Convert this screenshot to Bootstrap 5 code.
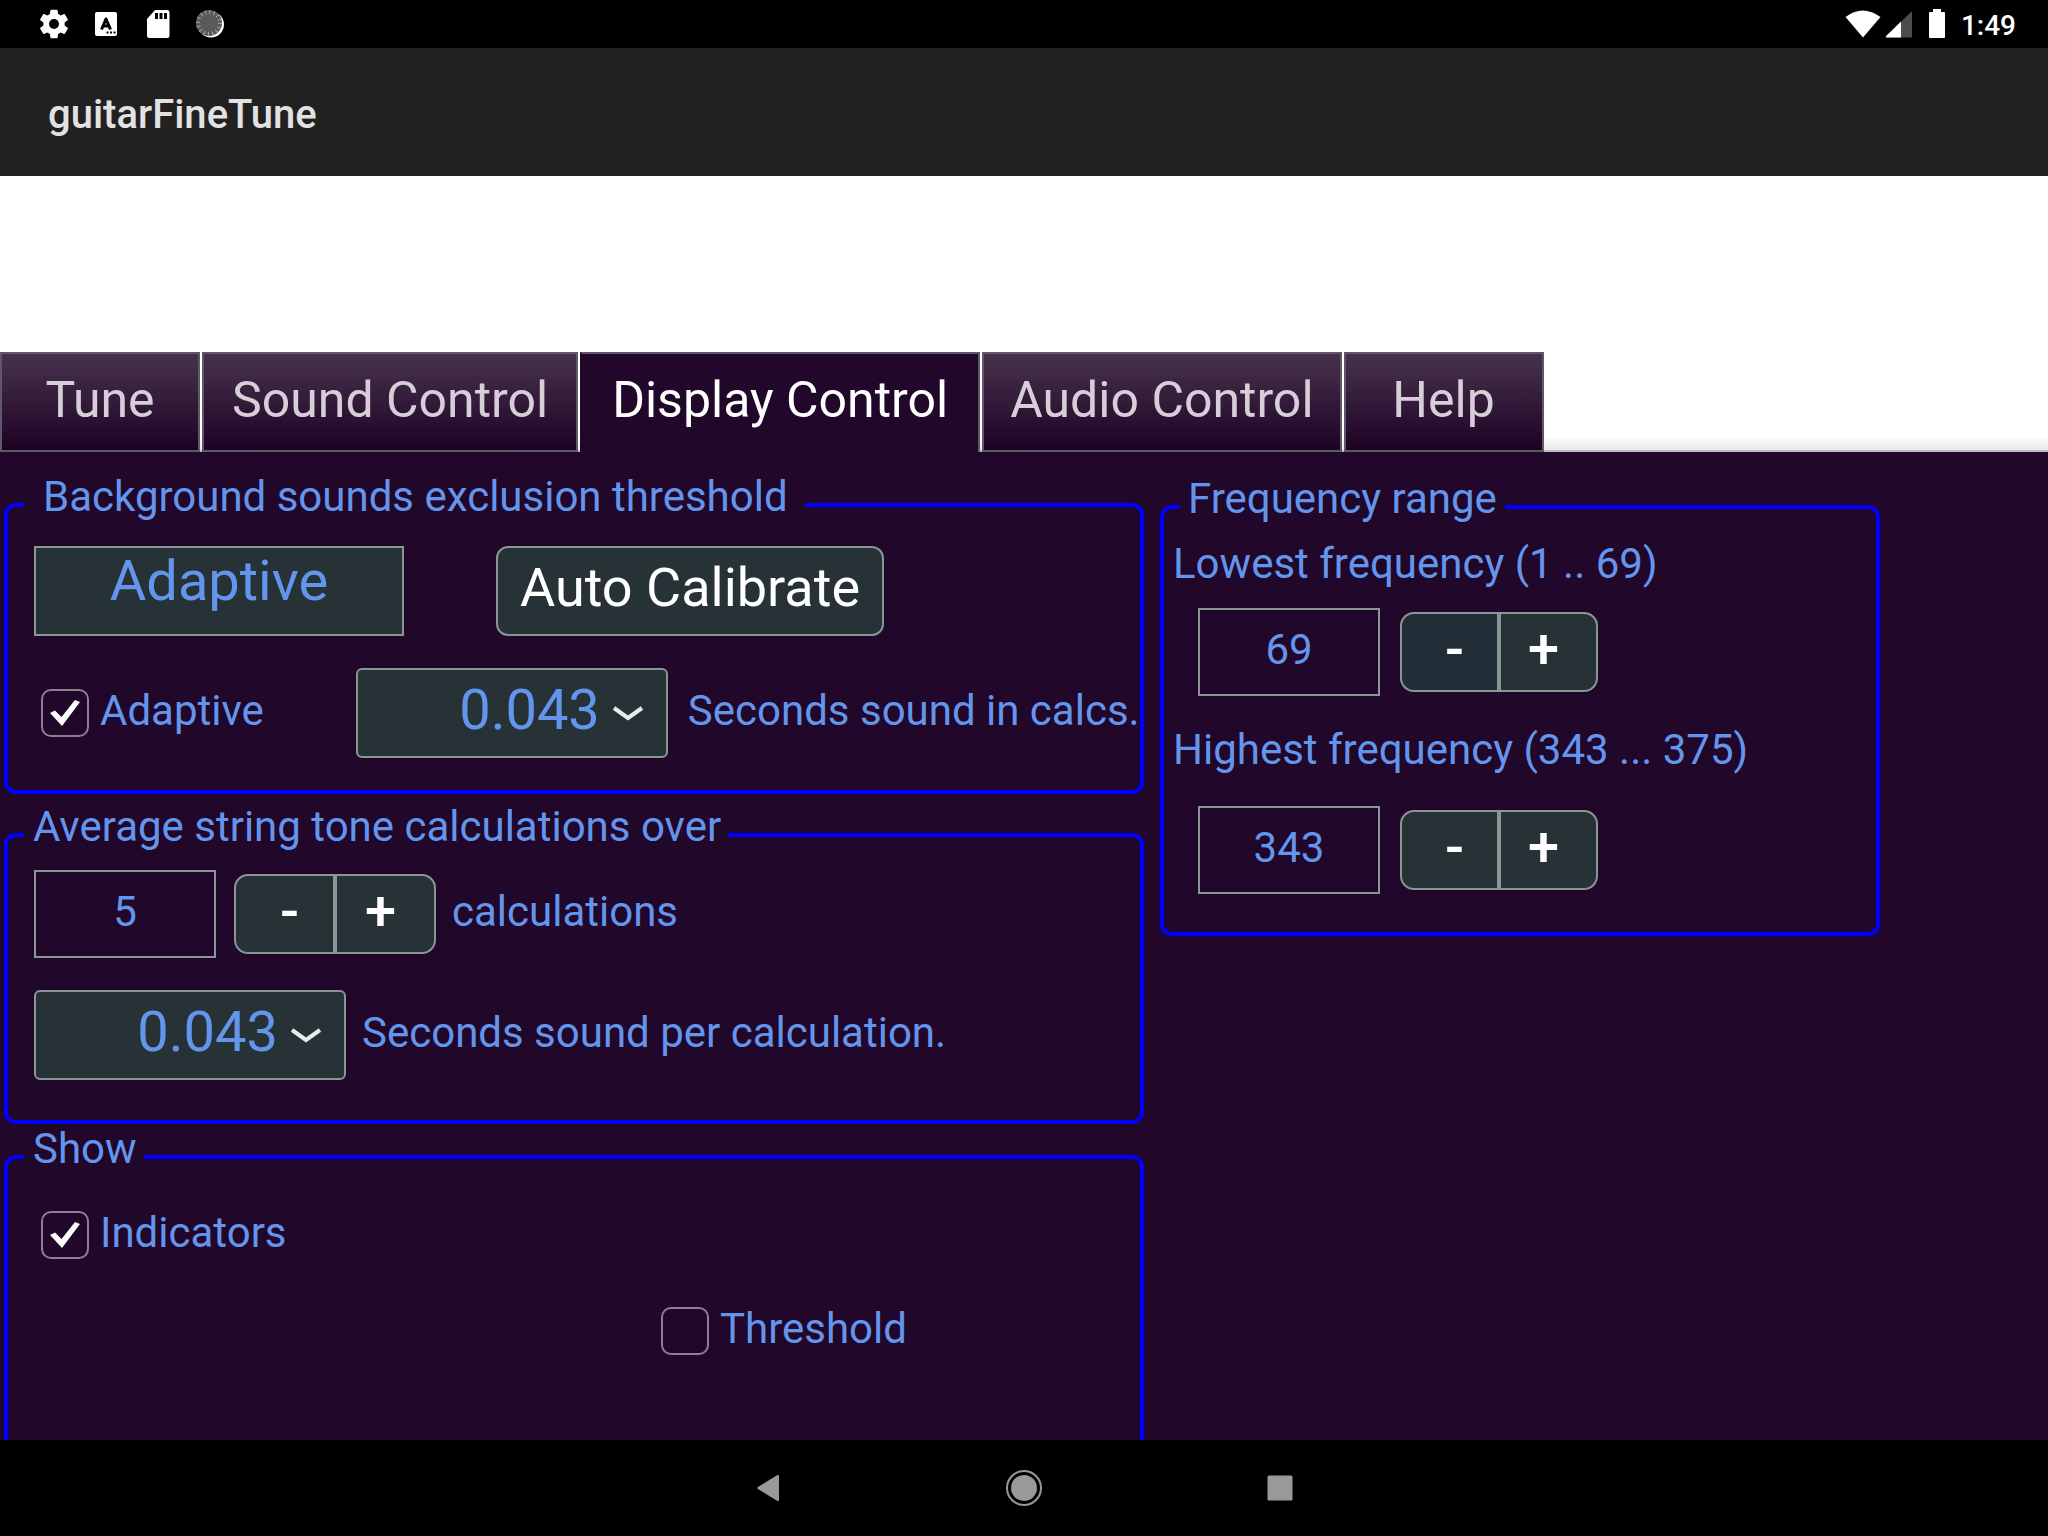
<!DOCTYPE html>
<html lang="en">
<head>
<meta charset="utf-8">
<meta name="viewport" content="width=device-width, initial-scale=1">
<title>guitarFineTune</title>
<link href="https://cdn.jsdelivr.net/npm/bootstrap@5.3.0/dist/css/bootstrap.min.css" rel="stylesheet">
<style>
  :root { --bg: #210729; --ink: #6495ed; --key: #273236; --edge: #8b9596; }
  body { font-family: Roboto, "Liberation Sans", sans-serif; background: #000; color: var(--ink); font-size: 42px; line-height: 48px; }

  .status-bar { height: 48px; padding: 0 32px 0 40px; background: #000; color: #fff; font-size: 28px; font-weight: 500; }
  .status-bar svg { display: block; }
  .title-bar { height: 128px; padding: 6px 48px 0; background: #212121; color: #e2e2e2; font-size: 40px; font-weight: 500; }
  .title-bar h1 { font: inherit; margin: 0; }

  .tab-strip { padding-top: 176px; background: #fff; }
  .tab-list { gap: 2px; background: linear-gradient(#fff 84%, #e4e4e6); box-shadow: inset 0 -2px #bcc0c4; }
  .tab-key { height: 100px; min-width: 200px; padding: 0 28px 4px; border: 2px solid #5f5869; border-radius: 0;
             background: linear-gradient(#46304b 0%, #3d2743 25%, #24092b 85%, #1a0420 100%); color: #d6cfd9; font-size: 50px; line-height: 60px; }
  .tab-key.active { background: var(--bg); color: #fff; border-bottom: 0; border-left-color: var(--bg); padding: 0 30px 6px; }
  .tab-key.active + .tab-key { padding-left: 26px; padding-right: 26px; }

  .panels { grid-template-columns: 1140fr 720fr 152fr; column-gap: 16px; align-items: start; padding: 21px 0 0 4px; background: var(--bg); min-height: 0; }
  .panels > * { min-width: 0; }
  .group { border: 4px solid #00f; border-radius: 12px; padding: 0 0 0 26px; min-width: 0; }
  .group legend { float: none; width: auto; margin: 0 0 0 -10px; padding: 0 7px 16px 9px; font-size: 42px; line-height: 48px; }
  .group legend.wide { padding: 0 17px 16px 19px; }
  .group-sound { padding-top: 9px; padding-bottom: 32px; }
  .group-average { margin-top: 9px; padding-top: 3px; padding-bottom: 40px; }
  .group-show { margin-top: 1px; padding-top: 20px; padding-bottom: 120px; }
  .group-range { margin-top: 2px; padding: 1px 8px 38px; }
  .group-range legend { margin-left: 8px; padding: 0 8px 16px; }
  .group-range .form-line { padding-left: 26px; }
  .caption { padding-bottom: 4px; white-space: nowrap; }
  .group-range .caption { display: block; padding: 0 0 0 1px; }
  .group-range .form-line + .caption { margin-top: 30px; }

  .mode-box { width: 370px; height: 90px; padding-bottom: 22px; background: var(--key); border: 2px solid var(--edge); font-size: 56px; line-height: 66px; color: var(--ink); text-align: center; border-radius: 0; }
  .calibrate { width: 388px; height: 90px; margin-left: 92px; padding: 0 0 6px; background: var(--key); border: 2px solid var(--edge); border-radius: 12px; color: #fff; font-size: 54px; line-height: 64px; font-weight: 400; }
  .pick { width: 312px; height: 90px; padding: 0 66px 6px 0; border: 2px solid var(--edge); border-radius: 6px; color: var(--ink); font-size: 56px; line-height: 66px; text-align: right; text-align-last: right; appearance: none;
          background: var(--key) url("data:image/svg+xml,%3Csvg xmlns='http://www.w3.org/2000/svg' width='32' height='16'%3E%3Cpath d='M2 3 16 13 30 3' fill='none' stroke='%23eaeaea' stroke-width='4'/%3E%3C/svg%3E") no-repeat right 22px center; }
  .number-box { width: 182px; height: 88px; padding: 0 0 6px; background: transparent; border: 2px solid var(--edge); border-radius: 0; color: var(--ink); font-size: 42px; line-height: 48px; text-align: center; }
  .stepper { margin-left: 18px; }
  .step { width: 101px; height: 80px; padding: 0 0 6px; background: var(--key); border: 2px solid var(--edge); border-radius: 14px; color: #fff; font-size: 56px; line-height: 60px; font-weight: 500; }
  .step.less { padding-left: 10px; border-top-right-radius: 0; border-bottom-right-radius: 0; }
  .step.more { padding-right: 10px; border-top-left-radius: 0; border-bottom-left-radius: 0; }
  .group-range .stepper { margin-left: 20px; }
  .group-range .step { width: 99px; }
  .step.held { background: #212e38; }

  .tick { width: 48px; height: 48px; margin: 0 11px 0 7px; flex: none; appearance: none; border: 2px solid #8d8191; border-radius: 10px; background: transparent; }
  .tick:checked { background: url("data:image/svg+xml,%3Csvg xmlns='http://www.w3.org/2000/svg' viewBox='0 0 44 44'%3E%3Cpath d='M7 22 12 19.500 18.500 26 32 9 37 11 19 35Z' fill='%23fff'/%3E%3C/svg%3E") center / 44px 44px no-repeat; }
  .pick-offset { margin-left: 92px; flex: none; }
  .threshold-line { margin-top: 44px; padding-left: 620px; }

  .nav-keys { height: 96px; background: #000; gap: 192px; }
  .nav-key { width: 64px; height: 64px; padding: 0; border: 0; background: none; }
</style>
<script src="https://cdn.jsdelivr.net/npm/bootstrap@5.3.0/dist/js/bootstrap.bundle.min.js"></script>
</head>
<body class="d-flex flex-column vh-100 overflow-hidden">

<div class="status-bar d-flex align-items-center justify-content-between flex-shrink-0">
  <div class="d-flex align-items-center">
    <svg width="28" height="30" viewBox="2.200 2 19.600 20" aria-label="Settings"><path fill="#fff" d="M19.430 12.980c.04-.32.07-.64.07-.98s-.03-.66-.07-.98l2.110-1.650c.19-.15.24-.42.12-.64l-2-3.460c-.12-.22-.39-.3-.61-.22l-2.490 1c-.52-.4-1.080-.73-1.690-.98l-.38-2.650C14.460 2.180 14.250 2 14 2h-4c-.25 0-.46.18-.49.42l-.38 2.650c-.61.25-1.170.59-1.690.98l-2.490-1c-.23-.09-.49 0-.61.22l-2 3.460c-.13.22-.07.49.12.64l2.110 1.650c-.04.32-.07.65-.07.98s.03.66.07.98l-2.110 1.650c-.19.15-.24.42-.12.64l2 3.460c.12.22.39.3.61.22l2.490-1c.52.4 1.080.73 1.690.98l.38 2.650c.03.24.24.42.49.42h4c.25 0 .46-.18.49-.42l.38-2.650c.61-.25 1.170-.59 1.690-.98l2.490 1c.23.09.49 0 .61-.22l2-3.460c.12-.22.07-.49-.12-.64zM12 15.500A3.500 3.500 0 1 1 12 8.500a3.500 3.500 0 0 1 0 7z"/></svg>
    <svg class="ms-4" width="30" height="30" viewBox="0 0 30 30" aria-label="Keyboard"><rect x="3" y="3" width="22" height="24" rx="2" fill="#fff"/><path d="M9.500 20.500 14 10 18.500 20.500M11.500 17h5" fill="none" stroke="#000" stroke-width="3" stroke-linejoin="round"/><path d="M14.500 22.500h2v2h-2zM18 22.500h2v2h-2zM21.500 22.500h2v2h-2z"/></svg>
    <svg class="ms-4" width="24" height="30" viewBox="0 0 24 30" aria-label="SD card"><path d="M9 1h12a2.500 2.500 0 0 1 2.500 2.500v23a2.500 2.500 0 0 1-2.500 2.500H3.500A2.500 2.500 0 0 1 1 26.500V10z" fill="#fff"/><path d="M9 4h3v6H9zM13.500 4h3v6h-3zM18 4h3v6h-3z"/></svg>
    <svg class="ms-4" width="32" height="30" viewBox="0 0 32 30" aria-label="Busy"><circle cx="17" cy="15.500" r="13" fill="#fff"/><circle cx="15" cy="14" r="13" fill="#5a5a5a"/><circle cx="15" cy="14" r="11" fill="none" stroke="#aaa" stroke-width="4" stroke-dasharray="1 3.320"/></svg>
  </div>
  <div class="d-flex align-items-center">
    <svg width="36" height="30" viewBox="0 0 36 30" aria-label="Wi-Fi"><path d="M.5 8Q17.500-5 35.500 8L18 28.500Z" fill="#fff"/></svg>
    <svg class="ms-1" width="28" height="30" viewBox="0 0 28 30" aria-label="Signal"><path d="M27 3v24.500a1 1 0 0 1-1 1H2q-2 0-.8-1.500L26 3q1-.8 1 0Z" fill="#4d4d4d"/><path d="M16 12.500v16H2q-2 0-.8-1.500Z" fill="#fff"/></svg>
    <svg class="ms-3" width="16" height="30" viewBox="0 0 16 30" aria-label="Battery"><path d="M4 0h8v3h3a1 1 0 0 1 1 1v24a1 1 0 0 1-1 1H1a1 1 0 0 1-1-1V4a1 1 0 0 1 1-1h3z" fill="#fff"/></svg>
    <span class="ms-3 pt-1">1:49</span>
  </div>
</div>

<header class="title-bar d-flex align-items-center flex-shrink-0"><h1>guitarFineTune</h1></header>

<nav class="tab-strip flex-shrink-0">
  <div class="tab-list d-flex" role="tablist">
    <button type="button" class="tab-key" role="tab">Tune</button>
    <button type="button" class="tab-key" role="tab">Sound Control</button>
    <button type="button" class="tab-key active" role="tab" aria-selected="true">Display Control</button>
    <button type="button" class="tab-key" role="tab">Audio Control</button>
    <button type="button" class="tab-key" role="tab">Help</button>
  </div>
</nav>

<main class="panels d-grid flex-grow-1 overflow-hidden">
  <div>
    <fieldset class="group group-sound">
      <legend class="wide">Background sounds exclusion threshold</legend>
      <div class="d-flex align-items-center">
        <input class="mode-box" type="text" value="Adaptive" readonly aria-label="Threshold mode">
        <button type="button" class="calibrate">Auto Calibrate</button>
      </div>
      <div class="d-flex align-items-center mt-4 pt-2">
        <input class="tick" type="checkbox" id="adaptive" checked>
        <label class="caption" for="adaptive">Adaptive</label>
        <select class="pick pick-offset" id="soundSeconds"><option>0.043</option></select>
        <label class="caption ms-3 ps-1" for="soundSeconds">Seconds sound in calcs.</label>
      </div>
    </fieldset>

    <fieldset class="group group-average">
      <legend>Average string tone calculations over</legend>
      <div class="d-flex align-items-center">
        <input class="number-box" type="text" id="averageCount" value="5">
        <div class="stepper d-flex">
          <button type="button" class="step less">-</button>
          <button type="button" class="step more">+</button>
        </div>
        <label class="caption ms-3" for="averageCount">calculations</label>
      </div>
      <div class="d-flex align-items-center mt-4 pt-2">
        <select class="pick" id="calcSeconds"><option>0.043</option></select>
        <label class="caption ms-3" for="calcSeconds">Seconds sound per calculation.</label>
      </div>
    </fieldset>

    <fieldset class="group group-show">
      <legend>Show</legend>
      <div class="d-flex align-items-center">
        <input class="tick" type="checkbox" id="indicators" checked>
        <label class="caption" for="indicators">Indicators</label>
      </div>
      <div class="threshold-line d-flex align-items-center">
        <input class="tick" type="checkbox" id="threshold">
        <label class="caption" for="threshold">Threshold</label>
      </div>
    </fieldset>
  </div>

  <fieldset class="group group-range">
    <legend>Frequency range</legend>
    <label class="caption" for="lowest">Lowest frequency (1 .. 69)</label>
    <div class="form-line d-flex align-items-center mt-3 pt-1">
      <input class="number-box" type="text" id="lowest" value="69">
      <div class="stepper d-flex">
        <button type="button" class="step less held">-</button>
        <button type="button" class="step more">+</button>
      </div>
    </div>
    <label class="caption" for="highest">Highest frequency (343 ... 375)</label>
    <div class="form-line d-flex align-items-center mt-4 pt-2">
      <input class="number-box" type="text" id="highest" value="343">
      <div class="stepper d-flex">
        <button type="button" class="step less">-</button>
        <button type="button" class="step more">+</button>
      </div>
    </div>
  </fieldset>
</main>

<footer class="nav-keys d-flex align-items-center justify-content-center flex-shrink-0">
  <button type="button" class="nav-key" aria-label="Back"><svg class="d-block" width="64" height="64" viewBox="0 0 64 64"><path d="M22 31 41 19.300q2-1 2 1v23.400q0 2-2 1L22 33q-1.500-1 0-2Z" fill="#999"/></svg></button>
  <button type="button" class="nav-key" aria-label="Home"><svg class="d-block" width="64" height="64" viewBox="0 0 64 64"><circle cx="32" cy="32" r="17" fill="none" stroke="#999" stroke-width="2"/><circle cx="32" cy="32" r="13" fill="#999"/></svg></button>
  <button type="button" class="nav-key" aria-label="Recent apps"><svg class="d-block" width="64" height="64" viewBox="0 0 64 64"><rect x="19.500" y="19.500" width="25" height="25" rx="1.500" fill="#999"/></svg></button>
</footer>
</body>
</html>
